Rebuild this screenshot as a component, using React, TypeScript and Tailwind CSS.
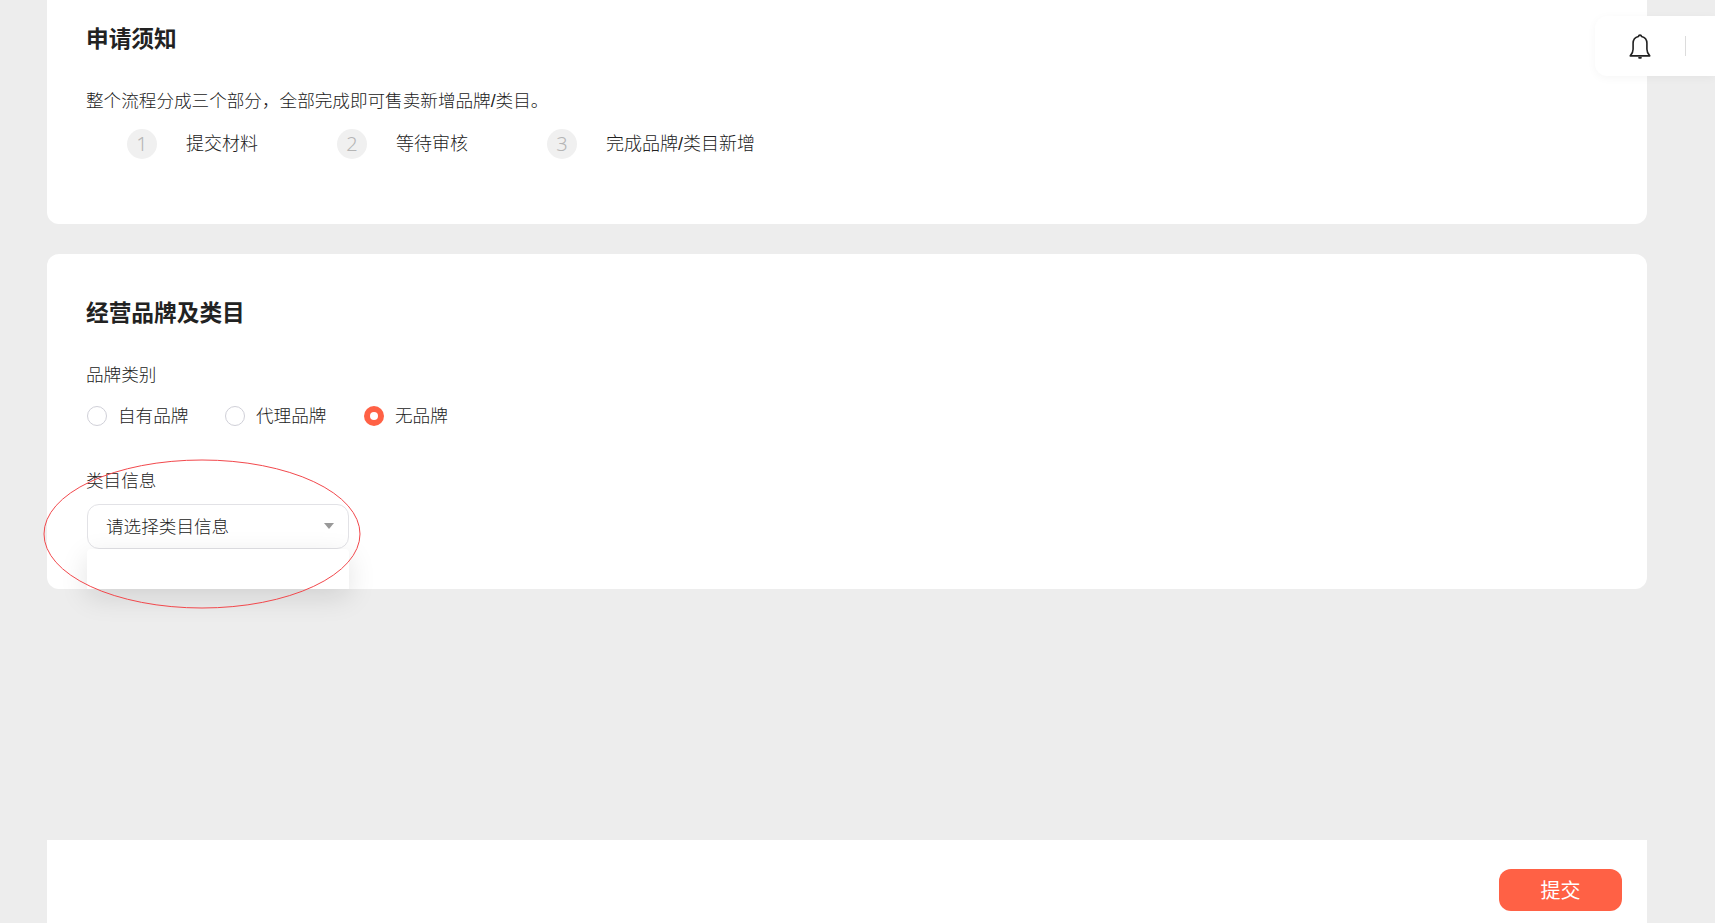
const steps = [
  { n: 1, label: '提交材料' },
  { n: 2, label: '等待审核' },
  { n: 3, label: '完成品牌/类目新增' },
]

const brandTypes = [
  { label: '自有品牌', checked: false, cls: 'w-[138px]' },
  { label: '代理品牌', checked: false, cls: 'w-[139px]' },
  { label: '无品牌', checked: true, cls: '' },
]

function Radio({ checked }: { checked: boolean }) {
  if (checked) {
    return (
      <span className="flex h-5 w-5 items-center justify-center rounded-full bg-[#ff6145]">
        <span className="h-2 w-2 rounded-full bg-white" />
      </span>
    )
  }
  return <span className="h-5 w-5 rounded-full border border-[#d0d0d8] bg-white" />
}

export default function App() {
  return (
    <div className="relative flex h-[923px] flex-col overflow-hidden bg-[#ededed] pl-[47px] font-['Liberation_Sans','Noto_Sans_CJK_SC',sans-serif] font-light text-[#222]">
      {/* 申请须知 */}
      <section className="h-[224px] w-[1600px] shrink-0 rounded-b-xl bg-white pl-10 pt-[24px]">
        <h2 className="-ml-px text-[22.7px] leading-[30px] font-bold text-[#222]">申请须知</h2>
        <p className="-ml-px mt-[34px] text-[17.6px] leading-[26px]">整个流程分成三个部分，全部完成即可售卖新增品牌/类目。</p>
        <div className="mt-[15px] flex pl-10">
          {steps.map((s) => (
            <div key={s.n} className="flex w-[210px] items-center">
              <span className="flex h-[30px] w-[30px] items-center justify-center rounded-full bg-[#f0f0f0] font-['Noto_Sans'] text-[20px] text-[#b5b5b5]">{s.n}</span>
              <span className="ml-[29px] whitespace-nowrap text-[18px]">{s.label}</span>
            </div>
          ))}
        </div>
      </section>

      {/* 经营品牌及类目 */}
      <section className="mt-[30px] h-[335px] w-[1600px] shrink-0 rounded-xl bg-white pl-10 pt-[44px]">
        <h2 className="-ml-px text-[22.7px] leading-[30px] font-bold text-[#222]">经营品牌及类目</h2>
        <div className="-ml-px mt-[34px] text-[17.6px] leading-[26px]">品牌类别</div>
        <div className="mt-[15px] flex items-center text-[17.6px] leading-[26px]">
          {brandTypes.map((b) => (
            <label key={b.label} className={`flex items-center gap-[11px] ${b.cls}`}>
              <Radio checked={b.checked} />
              <span>{b.label}</span>
            </label>
          ))}
        </div>
        <div className="-ml-px mt-[39px] text-[17.6px] leading-[26px]">类目信息</div>
        <div className="relative mt-[10px] w-[262px]">
          <div className="flex h-[45px] items-center justify-between rounded-xl border border-[#e2e2e6] bg-white pl-[18px] pr-[14px] pt-[2px] text-[17.6px]">
            <span>请选择类目信息</span>
            <span className="mb-1 h-0 w-0 border-x-[5px] border-t-[6px] border-x-transparent border-t-[#999]" />
          </div>
          <div className="absolute left-0 top-[45px] z-10 h-[40px] w-full rounded-t-sm bg-white shadow-[0_8px_28px_rgba(0,0,0,0.12)]" />
        </div>
      </section>

      {/* footer */}
      <div className="mt-[251px] flex w-[1600px] flex-1 items-start justify-end bg-white pr-[25px] pt-[29px]">
        <button className="h-[42px] w-[123px] rounded-xl bg-[#ff6145] pt-[2px] text-[20px] font-normal text-white">提交</button>
      </div>

      {/* 通知 */}
      <div className="absolute right-0 top-4 flex h-[60px] w-[120px] items-center rounded-l-xl bg-white pl-[34px] shadow-[0_2px_10px_rgba(0,0,0,0.04)]">
        <svg width="22" height="27" viewBox="0 0 20 25" fill="none" stroke="#222" strokeWidth="1.5" strokeLinejoin="round" strokeLinecap="round">
          <path d="M8.6 3.2C8.8 1.6 11.2 1.6 11.4 3.2C14.6 3.9 16.4 6.4 16.4 9.6V15C16.4 17.6 17.6 19.6 19 21.2H1C2.4 19.6 3.6 17.6 3.6 15V9.6C3.6 6.4 5.4 3.9 8.6 3.2Z" />
          <path d="M9 23H11" />
        </svg>
        <span className="ml-[34px] h-5 w-px bg-[#dcdcdc]" />
      </div>

      {/* 红圈标注 */}
      <svg className="pointer-events-none absolute left-[40px] top-[456px] z-20" width="330" height="156" viewBox="0 0 330 156" fill="none">
        <ellipse cx="162" cy="78" rx="158" ry="74" stroke="#f2484c" strokeWidth="1" />
      </svg>
    </div>
  )
}
